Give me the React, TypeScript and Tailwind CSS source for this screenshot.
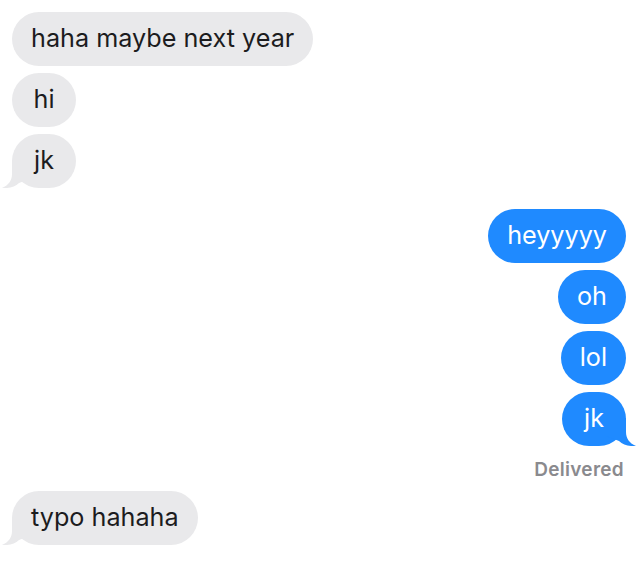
import React from "react";

function Tail({ side, color }: { side: "left" | "right"; color: string }) {
  return (
    <svg
      width="30"
      height="28"
      viewBox="0 0 30 28"
      className={
        side === "left"
          ? "absolute left-[-10px] bottom-0"
          : "absolute right-[-10px] bottom-0 -scale-x-100"
      }
    >
      <path
        d="M10,0 L10,14 C10,20 7,25 0,28 C7,28.5 13,27 17,23 L30,18 L30,0 Z"
        fill={color}
      />
    </svg>
  );
}

function Bubble({
  text,
  me,
  tail,
}: {
  text: string;
  me?: boolean;
  tail?: boolean;
}) {
  const color = me ? "#1f8aff" : "#e9e9eb";
  return (
    <div className={me ? "flex justify-end" : "flex justify-start"}>
      <div
        className={
          me
            ? "relative h-[54px] min-w-[64px] rounded-[27px] bg-[#1f8aff] px-[19px] flex items-center justify-center text-white"
            : "relative h-[54px] min-w-[64px] rounded-[27px] bg-[#e9e9eb] px-[19px] flex items-center justify-center text-[#1c1c1e]"
        }
      >
        {tail && <Tail side={me ? "right" : "left"} color={color} />}
        <span className="relative text-[25.2px] leading-none">{text}</span>
      </div>
    </div>
  );
}

export default function App() {
  return (
    <div
      className="w-[640px] h-[572px] bg-white pl-[12px] pr-[14px] pt-[12px] flex flex-col"
      style={{ fontFamily: "Inter, 'Noto Sans', sans-serif" }}
    >
      <div className="flex flex-col gap-[7px]">
        <Bubble text="haha maybe next year" />
        <Bubble text="hi" />
        <Bubble text="jk" tail />
      </div>
      <div className="flex flex-col gap-[7px] mt-[21px]">
        <Bubble text="heyyyyy" me />
        <Bubble text="oh" me />
        <Bubble text="lol" me />
        <Bubble text="jk" me tail />
      </div>
      <div className="flex justify-end h-[45px] items-center pr-[2px] pt-[3px]">
        <span className="text-[19px] font-semibold text-[#8a8a8e] tracking-[0.3px]">
          Delivered
        </span>
      </div>
      <div className="flex flex-col">
        <Bubble text="typo hahaha" tail />
      </div>
    </div>
  );
}
